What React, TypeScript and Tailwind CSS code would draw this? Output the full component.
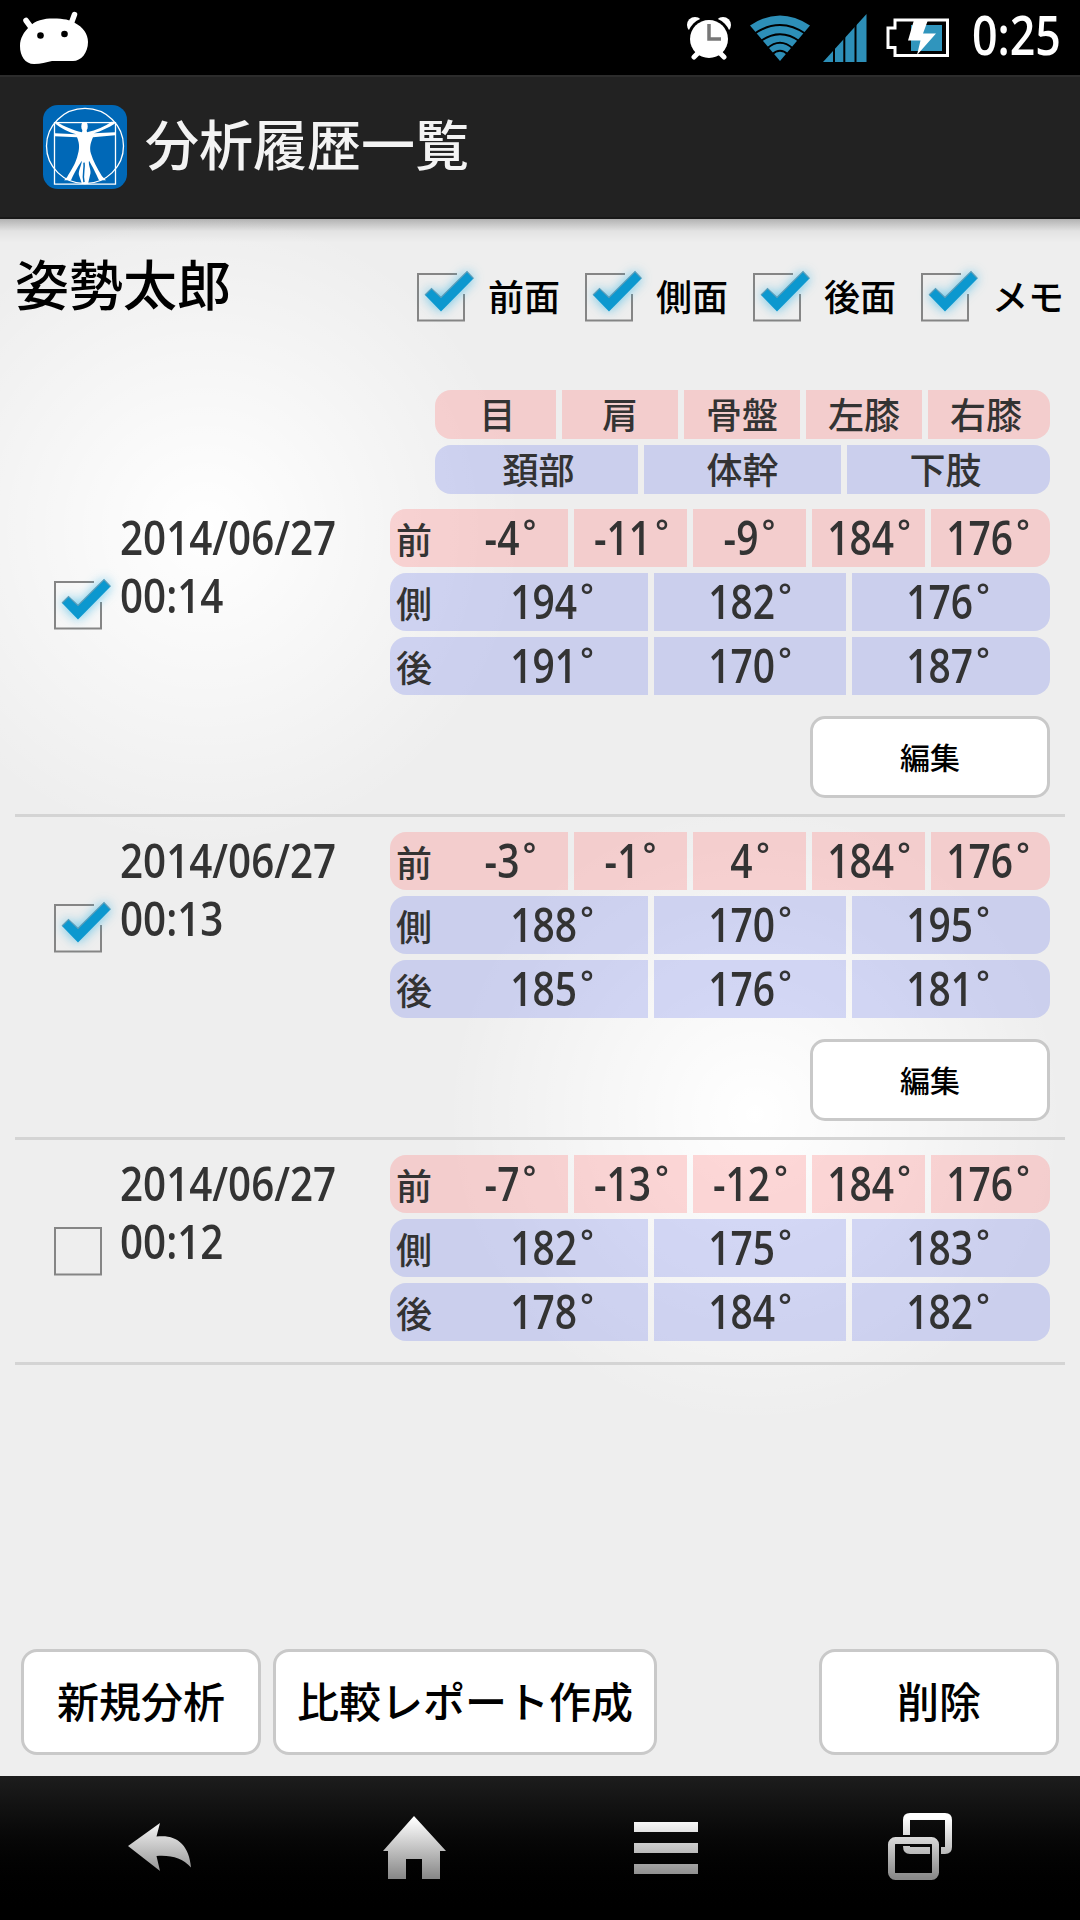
import { useState } from 'react';

interface HistoryRecord {
  date: string;
  time: string;
  front: number[];
  side: number[];
  back: number[];
  editable: boolean;
}

const records: HistoryRecord[] = [
  {
    date: '2014/06/27',
    time: '00:14',
    front: [-4, -11, -9, 184, 176],
    side: [194, 182, 176],
    back: [191, 170, 187],
    editable: true,
  },
  {
    date: '2014/06/27',
    time: '00:13',
    front: [-3, -1, 4, 184, 176],
    side: [188, 170, 195],
    back: [185, 176, 181],
    editable: true,
  },
  {
    date: '2014/06/27',
    time: '00:12',
    front: [-7, -13, -12, 184, 176],
    side: [182, 175, 183],
    back: [178, 184, 182],
    editable: false,
  },
];

const filters = ['前面', '側面', '後面', 'メモ'];

function StatusBar() {
  return (
    <div className="flex h-[75px] shrink-0 items-center bg-black pl-[17px] pr-[19px] text-white">
      <svg width="74" height="56" viewBox="0 0 74 56" fill="#fff">
        <path d="M12 17C19 9 30 8 40 8.500C50 9 55 11 58 13C66 17 71 24 71 32C71 43 64 51 56 51H35C29 52 24 54 17 54C8 54 3 46 3 36C3 28 7 22 12 17Z" />
        <path d="M9 10.500L14.500 18M57.500 4.500L54 14" stroke="#fff" strokeWidth="5.500" strokeLinecap="round" />
        <circle cx="23.500" cy="25.500" r="3.300" fill="#000" />
        <circle cx="47.500" cy="24" r="3.300" fill="#000" />
      </svg>
      <div className="flex-1" />
      <svg className="mr-[18px]" width="46" height="44" viewBox="0 0 46 44">
        <circle cx="9" cy="9" r="8" fill="#fff" />
        <circle cx="37" cy="9" r="8" fill="#fff" />
        <circle cx="23" cy="23" r="22" fill="#000" />
        <path d="M13 36L8 41M33 36L38 41" stroke="#fff" strokeWidth="5" strokeLinecap="round" />
        <circle cx="23" cy="23" r="19" fill="#fff" />
        <path d="M23 8V23H35" fill="none" stroke="#777" strokeWidth="3.500" />
      </svg>
      <svg className="mr-[13px]" width="60" height="46" viewBox="0 0 60 46">
        <path d="M0 10.500Q30 -9.500 60 10.500L30 46Z" fill="#2d8fb8" />
        <path
          d="M4 19Q30 1 56 19M10 26.500Q30 12 50 26.500M17 33.500Q30 22 43 33.500M22 39.500Q30 32 38 39.500"
          fill="none"
          stroke="#000"
          strokeWidth="2"
        />
      </svg>
      <svg className="mr-[19px]" width="44" height="48" viewBox="0 0 44 48">
        <path d="M0 48L43.500 0V48Z" fill="#2d8fb8" />
        <path d="M11 0V48M21.300 0V48M32.500 0V48" stroke="#000" strokeWidth="2" />
      </svg>
      <svg className="mr-[22px]" width="64" height="40" viewBox="0 0 64 40">
        <rect x="25" y="7" width="31" height="26" fill="#3095bd" />
        <path d="M9 2H61.500V37.500H9V29.500H2V10H9Z" fill="none" stroke="#fff" strokeWidth="3" />
        <path d="M28 2H42L37 15.500H50L31 37L34.500 22.500H22Z" fill="#fff" />
      </svg>
      <span className="-mt-[6px] w-[89px] origin-left scale-x-[0.82] whitespace-nowrap font-['Open_Sans',sans-serif] text-[54.5px] font-semibold leading-[75px]">
        0:25
      </span>
    </div>
  );
}

function AppLogo() {
  return (
    <svg width="84" height="84" viewBox="0 0 84 86" preserveAspectRatio="none">
      <rect width="84" height="86" rx="15" fill="#0068b7" />
      <g fill="none" stroke="#fff" strokeWidth="1.300">
        <circle cx="42" cy="42" r="38.500" />
        <rect x="11.500" y="18" width="61" height="63" />
      </g>
      <ellipse cx="41.500" cy="22" rx="3.200" ry="4.500" fill="#fff" />
      <path
        d="M39.500 25L39 28C30 26 21 22 15 18L12 19C18 24 26 28 33 30L12 29V32L34 33C36 38 37 43 35 50C33 60 28 67 24 74L21 77H28C32 68 36 61 39 57C38 63 35 68 36 72L39 81H44L45 81L47 72C49 67 45 62 46 57C49 62 53 70 56 77H63L59 73C54 65 50 57 48 50C46 43 48 38 50 33L72 31V28L51 29C58 27 66 23 72 19L69 17C62 22 53 26 44 28L43.500 25Z"
        fill="#fff"
      />
      <path d="M41 59C42 66 39 70 41 79" fill="none" stroke="#0068b7" strokeWidth="1.500" />
    </svg>
  );
}

function Checkbox({ checked, onChange }: { checked: boolean; onChange: () => void }) {
  return (
    <button role="checkbox" aria-checked={checked} onClick={onChange} className="size-[48px] shrink-0">
      <svg className="overflow-visible" width="48" height="48" viewBox="0 0 48 48">
        {checked ? (
          <>
            <path d="M40 1H1V47.500H47V21" fill="none" stroke="#858585" strokeWidth="2" />
            <path
              d="M8 22L14.500 15.500L24 24.500L50 -1.500L56.500 5.500L24 38.500Z"
              fill="#0c98cf"
              className="drop-shadow-[0_0_6px_rgba(51,181,229,0.8)]"
            />
            <path d="M8 22L14.500 15.500L24 24.500L50 -1.500L56.500 5.500" fill="none" stroke="#5c9cb8" strokeWidth="1.200" />
          </>
        ) : (
          <rect x="1" y="1" width="46" height="46.500" fill="none" stroke="#858585" strokeWidth="2" />
        )}
      </svg>
    </button>
  );
}

function Angle({ value }: { value: number }) {
  return (
    <span className="flex scale-x-[0.82] items-start self-start font-['Open_Sans',sans-serif] text-[47.5px] font-semibold leading-[55px]">
      {value}
      <span className="ml-[6px] w-[14px] scale-x-[1.2] text-[32px] leading-[43px]">°</span>
    </span>
  );
}

function FrontRow({ values }: { values: number[] }) {
  return (
    <div className="grid h-[58px] grid-cols-[178px_113px_113px_113px_119px] gap-x-1.5">
      {values.map((value, i) => (
        <div
          key={i}
          className="flex bg-[rgba(255,128,128,0.3)] first:rounded-l-[16px] last:rounded-r-[16px]"
        >
          {i === 0 && <span className="w-[63px] shrink-0 pl-[6px] text-[36px] leading-[58px]">前</span>}
          <div className="flex flex-1 justify-center">
            <Angle value={value} />
          </div>
          {i === 4 && <span className="w-[6px]" />}
        </div>
      ))}
    </div>
  );
}

function BodyRow({ label, values }: { label: string; values: number[] }) {
  return (
    <div className="grid h-[58px] grid-cols-[258px_192px_198px] gap-x-1.5">
      {values.map((value, i) => (
        <div
          key={i}
          className="flex bg-[rgba(122,135,236,0.3)] first:rounded-l-[16px] last:rounded-r-[16px]"
        >
          {i === 0 && <span className="w-[65px] shrink-0 pl-[6px] text-[36px] leading-[58px]">{label}</span>}
          <div className="flex flex-1 justify-center">
            <Angle value={value} />
          </div>
          {i === 2 && <span className="w-[6px]" />}
        </div>
      ))}
    </div>
  );
}

function TableHeader() {
  return (
    <div className="ml-[435px] mt-[62px] w-[615px] space-y-1.5 text-[36px] leading-[46px] text-[#333]">
      <div className="grid h-[49px] grid-cols-[121px_116px_116px_116px_122px] gap-x-1.5 text-center">
        {['目', '肩', '骨盤', '左膝', '右膝'].map((name) => (
          <div
            key={name}
            className="bg-[rgba(255,128,128,0.3)] first:rounded-l-[16px] first:pl-1 last:rounded-r-[16px] last:pr-1.5"
          >
            {name}
          </div>
        ))}
      </div>
      <div className="grid h-[49px] grid-cols-[203px_197px_203px] gap-x-1.5 text-center">
        {['頚部', '体幹', '下肢'].map((name) => (
          <div
            key={name}
            className="bg-[rgba(122,135,236,0.3)] first:rounded-l-[16px] first:pl-1 last:rounded-r-[16px] last:pr-1.5"
          >
            {name}
          </div>
        ))}
      </div>
    </div>
  );
}

function RecordItem({ record, checked, onToggle }: { record: HistoryRecord; checked: boolean; onToggle: () => void }) {
  return (
    <li className="mx-[15px] border-b-[3px] border-[#d4d4d4] pb-[16px] pr-[15px] pt-[15px] text-[#333] last:pb-[21px]">
      <div className="flex">
        <div className="ml-[39px] mt-[72px]">
          <Checkbox checked={checked} onChange={onToggle} />
        </div>
        <div className="-mt-px ml-[18px] flex-1 origin-left scale-x-[0.85] whitespace-nowrap font-['Open_Sans',sans-serif] text-[47.5px] font-semibold leading-[58px]">
          <p>{record.date}</p>
          <p>{record.time}</p>
        </div>
        <div className="w-[660px] shrink-0 space-y-1.5">
          <FrontRow values={record.front} />
          <BodyRow label="側" values={record.side} />
          <BodyRow label="後" values={record.back} />
        </div>
      </div>
      {record.editable && (
        <button className="ml-auto mt-[21px] block h-[82px] w-[240px] rounded-[15px] border-[3px] border-[#c9c9c9] bg-white pb-[2px] text-[30px] leading-[45px] text-black">
          編集
        </button>
      )}
    </li>
  );
}

function NavigationBar() {
  return (
    <nav className="flex h-[144px] shrink-0 items-center bg-linear-to-b from-[#1d1d1d] to-black">
      <svg width="1080" height="144" viewBox="0 0 1080 144">
        <defs>
          <linearGradient id="metal" gradientUnits="userSpaceOnUse" x1="0" y1="42" x2="0" y2="102">
            <stop offset="0" stopColor="#fff" />
            <stop offset="1" stopColor="#888" />
          </linearGradient>
        </defs>
        <g fill="url(#metal)">
          <path d="M128 70L160 47L156.500 60.500C176 58 189 68 191 91.500C182 82 172 79 156.500 80L160 95Z" />
          <path d="M414 40L446 75H440V103H422V83H406V103H388V75H383Z" />
          <path d="M634 46H698V56H634ZM634 67H698V77H634ZM634 88H698V98H634Z" />
        </g>
        <g fill="none" stroke="url(#metal)" strokeWidth="7">
          <path d="M906.500 59V44Q906.500 40.500 910 40.500H945Q948.500 40.500 948.500 44V71Q948.500 74.500 945 74.500H941M906.500 70Q906.500 74.500 910 74.500H930" />
          <rect x="891.500" y="64.500" width="44" height="36" rx="4" />
        </g>
      </svg>
    </nav>
  );
}

export default function App() {
  const [shown, setShown] = useState([true, true, true, true]);
  const [selected, setSelected] = useState([true, true, false]);

  const toggle = (list: boolean[], index: number) => list.map((on, i) => (i === index ? !on : on));

  return (
    <div className="flex h-[1920px] w-[1080px] flex-col overflow-hidden font-['Noto_Sans_CJK_JP',sans-serif] font-medium">
      <StatusBar />
      <header className="flex h-[144px] shrink-0 items-center border-b-2 border-t-2 border-b-[#181818] border-t-[#2c2c2c] bg-[#222] pl-[43px]">
        <AppLogo />
        <h1 className="ml-[18px] pb-[8px] text-[54px] leading-[80px] text-[#f3f3f3]">分析履歴一覧</h1>
      </header>

      <main className="flex flex-1 flex-col bg-[#eee] bg-[radial-gradient(circle_at_205px_310px,#fff_0,rgba(255,255,255,0)_320px),radial-gradient(circle_at_755px_895px,#fff_0,rgba(255,255,255,0)_310px)]">
        <div className="h-[24px] bg-linear-to-b from-black/25 via-black/5 to-transparent" />
        <div className="flex h-[85px] pl-[15px]">
          <h2 className="w-[402px] shrink-0 text-[54px] leading-[80px] text-black">姿勢太郎</h2>
          {filters.map((name, i) => (
            <label key={name} className="mt-[29px] flex h-[50px] w-[168px] shrink-0 items-center">
              <Checkbox checked={shown[i]} onChange={() => setShown(toggle(shown, i))} />
              <span className="-mt-[4px] ml-[23px] whitespace-nowrap text-[36px] leading-[53px] text-black">{name}</span>
            </label>
          ))}
        </div>

        <TableHeader />
        <ul>
          {records.map((record, i) => (
            <RecordItem
              key={record.time}
              record={record}
              checked={selected[i]}
              onToggle={() => setSelected(toggle(selected, i))}
            />
          ))}
        </ul>

        <div className="mb-[21px] mt-auto flex gap-3 px-[21px] text-[42px] leading-[62px] text-black">
          <button className="h-[106px] w-[240px] rounded-[16px] border-[3px] border-[#c9c9c9] bg-white pb-[4px]">
            新規分析
          </button>
          <button className="h-[106px] w-[384px] rounded-[16px] border-[3px] border-[#c9c9c9] bg-white pb-[4px]">
            比較レポート作成
          </button>
          <button className="ml-auto h-[106px] w-[240px] rounded-[16px] border-[3px] border-[#c9c9c9] bg-white pb-[4px]">
            削除
          </button>
        </div>
      </main>

      <NavigationBar />
    </div>
  );
}
